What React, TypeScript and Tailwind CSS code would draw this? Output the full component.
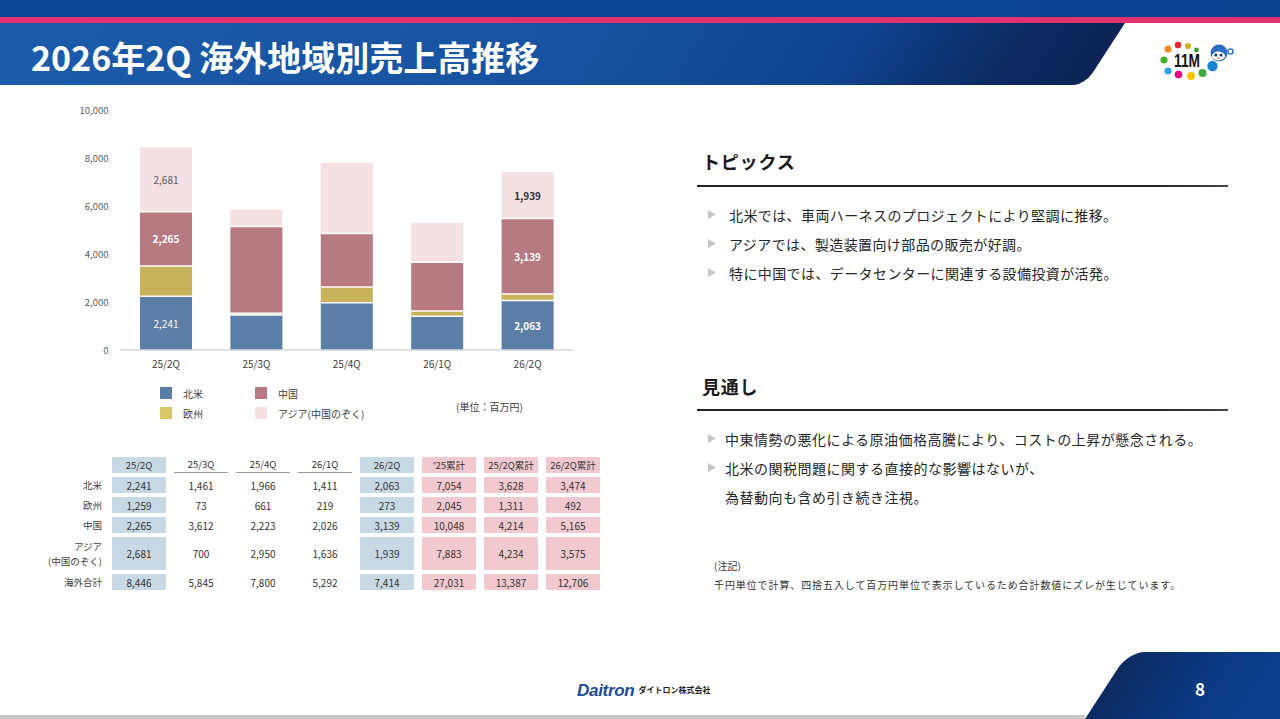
import React from "react";

const FONT = "'Noto Sans CJK JP', 'Noto Sans', sans-serif";

const series = [
  { name: "北米", color: "#5b7ea6", data: [2241, 1461, 1966, 1411, 2063] },
  { name: "欧州", color: "#c8b35a", data: [1259, 73, 661, 219, 273] },
  { name: "中国", color: "#b77a82", data: [2265, 3612, 2223, 2026, 3139] },
  { name: "アジア", color: "#f5e0e4", data: [2681, 700, 2950, 1636, 1939] },
];
const cats = ["25/2Q", "25/3Q", "25/4Q", "26/1Q", "26/2Q"];

const labels: { i: number; s: number; t: string; fill: string; bold: boolean }[] = [
  { i: 0, s: 0, t: "2,241", fill: "#ffffff", bold: false },
  { i: 0, s: 2, t: "2,265", fill: "#ffffff", bold: true },
  { i: 0, s: 3, t: "2,681", fill: "#595959", bold: false },
  { i: 4, s: 0, t: "2,063", fill: "#ffffff", bold: true },
  { i: 4, s: 2, t: "3,139", fill: "#ffffff", bold: true },
  { i: 4, s: 3, t: "1,939", fill: "#333333", bold: true },
];

function Chart() {
  const k = 0.024;
  const base = 250;
  const cx = (i: number) => 106 + i * 90.4;
  const w = 52;
  const rects: React.ReactNode[] = [];
  const seps: React.ReactNode[] = [];
  const texts: React.ReactNode[] = [];
  cats.forEach((_, i) => {
    let cum = 0;
    series.forEach((s, si) => {
      const v = s.data[i];
      const y = base - (cum + v) * k;
      rects.push(
        <rect key={`r${i}-${si}`} x={cx(i) - w / 2} y={y} width={w} height={v * k} fill={s.color} />
      );
      const lab = labels.find((l) => l.i === i && l.s === si);
      if (lab) {
        texts.push(
          <text
            key={`t${i}-${si}`}
            x={cx(i)}
            y={base - (cum + v / 2) * k}
            textAnchor="middle"
            dominantBaseline="central"
            fontSize={10}
            fontWeight={lab.bold ? 700 : 400}
            fill={lab.fill}
            fontFamily={FONT}
          >
            {lab.t}
          </text>
        );
      }
      cum += v;
      if (si < series.length - 1) {
        const yy = base - cum * k;
        seps.push(
          <line key={`s${i}-${si}`} x1={cx(i) - w / 2} x2={cx(i) + w / 2} y1={yy} y2={yy} stroke="#fff" strokeWidth={1.5} />
        );
      }
    });
  });
  const ticks = [10000, 8000, 6000, 4000, 2000, 0];
  return (
    <svg width={540} height={275} viewBox="0 0 540 275" className="block">
      {ticks.map((t) => (
        <text
          key={t}
          x={48.5}
          y={base - t * k}
          textAnchor="end"
          dominantBaseline="central"
          fontSize={9.5}
          fill="#595959"
          fontFamily={FONT}
        >
          {t.toLocaleString("en-US")}
        </text>
      ))}
      {rects}
      {seps}
      <line x1={60} x2={514} y1={base} y2={base} stroke="#d9d9d9" strokeWidth={1.5} />
      {texts}
      {cats.map((c, i) => (
        <text
          key={c}
          x={cx(i)}
          y={263}
          textAnchor="middle"
          dominantBaseline="central"
          fontSize={10}
          fill="#404040"
          fontFamily={FONT}
        >
          {c}
        </text>
      ))}
    </svg>
  );
}

function Logo() {
  return (
    <svg width={100} height={50} viewBox="0 5 100 50" className="block">
      <circle cx={18} cy={19} r={3.5} fill="#f08a24" />
      <circle cx={28} cy={15} r={3.2} fill="#e5262e" />
      <circle cx={38} cy={16} r={3} fill="#d4af1c" />
      <circle cx={46.5} cy={20} r={2.4} fill="#3f9b35" />
      <circle cx={14} cy={30} r={3.6} fill="#43b02a" />
      <circle cx={18} cy={41} r={3.6} fill="#29a8e0" />
      <circle cx={28.5} cy={44.5} r={3.8} fill="#e4007f" />
      <circle cx={41} cy={46} r={4} fill="#f7c600" />
      <circle cx={52.5} cy={43} r={4} fill="#3aa93a" />
      <circle cx={62.5} cy={36} r={5.2} fill="#1a85d0" />
      <text
        x={24}
        y={37}
        fontSize={18}
        fontWeight={700}
        fill="#111"
        fontFamily="'Liberation Sans', sans-serif"
        textLength={26}
        lengthAdjust="spacingAndGlyphs"
      >
        11M
      </text>
      <circle cx={80.5} cy={21.5} r={2.6} fill="none" stroke="#2a6cc0" strokeWidth={1.4} />
      <circle cx={69} cy={23} r={8.5} fill="#2a6cc0" />
      <ellipse cx={68.5} cy={26} rx={6.6} ry={4.4} fill="#fff" />
      <circle cx={65.8} cy={25} r={1.5} fill="#1a3470" />
      <circle cx={71} cy={25} r={1.5} fill="#1a3470" />
      <ellipse cx={68.4} cy={28.3} rx={1.6} ry={0.8} fill="#e07a7a" />
    </svg>
  );
}

type CellKind = "blue" | "plain" | "pink";
const headers: { t: string; k: CellKind }[] = [
  { t: "25/2Q", k: "blue" },
  { t: "25/3Q", k: "plain" },
  { t: "25/4Q", k: "plain" },
  { t: "26/1Q", k: "plain" },
  { t: "26/2Q", k: "blue" },
  { t: "'25累計", k: "pink" },
  { t: "25/2Q累計", k: "pink" },
  { t: "26/2Q累計", k: "pink" },
];
const rows: { label: string[]; v: string[] }[] = [
  { label: ["北米"], v: ["2,241", "1,461", "1,966", "1,411", "2,063", "7,054", "3,628", "3,474"] },
  { label: ["欧州"], v: ["1,259", "73", "661", "219", "273", "2,045", "1,311", "492"] },
  { label: ["中国"], v: ["2,265", "3,612", "2,223", "2,026", "3,139", "10,048", "4,214", "5,165"] },
  {
    label: ["アジア", "(中国のぞく)"],
    v: ["2,681", "700", "2,950", "1,636", "1,939", "7,883", "4,234", "3,575"],
  },
  { label: ["海外合計"], v: ["8,446", "5,845", "7,800", "5,292", "7,414", "27,031", "13,387", "12,706"] },
];

function bgFor(k: CellKind) {
  if (k === "blue") return "bg-[#c8d9e6]";
  if (k === "pink") return "bg-[#f2c9cf]";
  return "";
}

function DataTable() {
  return (
    <div className="ml-[40px] grid grid-cols-[64px_repeat(8,54px)] gap-x-[8px] gap-y-[4px] grid-rows-[16px_16px_16px_16px_33px_16px] text-[#333]">
      <div />
      {headers.map((h) => (
        <div
          key={h.t}
          className={`flex items-center justify-center text-[9.5px] whitespace-nowrap ${bgFor(h.k)} ${
            h.k === "plain" ? "border-b border-[#9a9a9a]" : ""
          }`}
        >
          {h.t}
        </div>
      ))}
      {rows.map((r) => (
        <React.Fragment key={r.label.join("")}>
          <div className="flex flex-col items-end justify-center pr-[2px] text-[9.5px] leading-[15px] whitespace-nowrap text-[#404040]">
            {r.label.map((l) => (
              <span key={l}>{l}</span>
            ))}
          </div>
          {r.v.map((v, ci) => (
            <div
              key={ci}
              className={`flex items-center justify-center text-[10px] ${bgFor(headers[ci].k)}`}
            >
              {v}
            </div>
          ))}
        </React.Fragment>
      ))}
    </div>
  );
}

function Tri() {
  return (
    <svg width={8} height={9} viewBox="0 0 8 9" className="block shrink-0">
      <polygon points="0,0 8,4.5 0,9" fill="#c6c6c6" />
    </svg>
  );
}

function Legend() {
  const items = [
    { c: "#5b7ea6", t: "北米" },
    { c: "#b77a82", t: "中国" },
    { c: "#dcc768", t: "欧州" },
    { c: "#f5e0e4", t: "アジア(中国のぞく)" },
  ];
  return (
    <div className="flex ml-[160px] mt-[12px]">
      <div className="grid grid-cols-[95px_140px] gap-y-[8px]">
        {items.map((it) => (
          <div key={it.t} className="flex items-center h-[12px]">
            <div className="w-[12px] h-[12px] shrink-0" style={{ backgroundColor: it.c }} />
            <span className="ml-[11px] text-[10px] text-[#404040] whitespace-nowrap">{it.t}</span>
          </div>
        ))}
      </div>
      <div className="ml-[61px] mt-[15px] text-[10px] text-[#404040] whitespace-nowrap leading-none">
        (単位：百万円)
      </div>
    </div>
  );
}

export default function App() {
  return (
    <div className="w-[1280px] h-[719px] bg-white overflow-hidden flex flex-col font-['Noto_Sans_CJK_JP','Noto_Sans',sans-serif] text-[#262626]">
      {/* header */}
      <div className="h-[17px] shrink-0 bg-[linear-gradient(90deg,#0b4797,#0a4290)]" />
      <div className="h-[6px] shrink-0 bg-[#e2336f]" />
      <div className="h-[62px] shrink-0 flex">
        <div className="relative w-[1125px] h-full overflow-hidden flex items-center pl-[31px]">
          <div className="absolute top-0 bottom-0 left-[-60px] w-[1185px] origin-top-left [transform:skewX(-33deg)] rounded-br-[12px] bg-[linear-gradient(90deg,#1d5dab_0%,#16529f_55%,#0f4390_78%,#0c2a60_92%,#0c2456_100%)]" />
          <h1 className="relative text-white font-bold text-[34px] leading-none pt-[5px] whitespace-nowrap">
            2026年2Q 海外地域別売上高推移
          </h1>
        </div>
        <div className="flex-1 pt-[12px] pl-[25px]">
          <Logo />
        </div>
      </div>

      {/* main */}
      <div className="flex-1 flex min-h-0">
        <div className="w-[640px] shrink-0 pt-[15px]">
          <div className="ml-[60px]">
            <Chart />
          </div>
          <Legend />
          <div className="mt-[38px]">
            <DataTable />
          </div>
        </div>
        <div className="flex-1">
          <div className="ml-[57px] w-[531px] pt-[63px]">
            <div className="pl-[5px] text-[18px] font-bold leading-[26px] tracking-[0.8px] text-[#1a1a1a]">
              トピックス
            </div>
            <div className="mt-[11px] h-[2px] bg-[linear-gradient(90deg,#222,#222_85%,#444)]" />
            <ul className="mt-[13px]">
              {[
                "北米では、車両ハーネスのプロジェクトにより堅調に推移。",
                "アジアでは、製造装置向け部品の販売が好調。",
                "特に中国では、データセンターに関連する設備投資が活発。",
              ].map((t) => (
                <li key={t} className="flex items-center h-[29px]">
                  <span className="ml-[11px]">
                    <Tri />
                  </span>
                  <span className="ml-[13px] text-[14px] leading-none tracking-[0.4px] whitespace-nowrap">{t}</span>
                </li>
              ))}
            </ul>

            <div className="mt-[86px] pl-[5px] text-[18px] font-bold leading-[26px] tracking-[0.8px] text-[#1a1a1a]">
              見通し
            </div>
            <div className="mt-[10px] h-[2px] bg-[linear-gradient(90deg,#222,#222_85%,#444)]" />
            <ul className="mt-[13px]">
              <li className="flex items-center h-[29px]">
                <span className="ml-[11px]">
                  <Tri />
                </span>
                <span className="ml-[9px] text-[14px] leading-none tracking-[0.5px] whitespace-nowrap">
                  中東情勢の悪化による原油価格高騰により、コストの上昇が懸念される。
                </span>
              </li>
              <li className="flex items-center h-[29px]">
                <span className="ml-[11px]">
                  <Tri />
                </span>
                <span className="ml-[9px] text-[14px] leading-none tracking-[0.5px] whitespace-nowrap">
                  北米の関税問題に関する直接的な影響はないが、
                </span>
              </li>
              <li className="flex items-center h-[29px] pl-[28px]">
                <span className="text-[14px] leading-none tracking-[0.5px] whitespace-nowrap">為替動向も含め引き続き注視。</span>
              </li>
            </ul>

            <div className="mt-[47px] pl-[17px] text-[10px] leading-[16px] text-[#333]">(注記)</div>
            <div className="mt-[3px] pl-[17px] text-[10px] leading-[16px] tracking-[0.9px] text-[#333] whitespace-nowrap">
              千円単位で計算、四捨五入して百万円単位で表示しているため合計数値にズレが生じています。
            </div>
          </div>
        </div>
      </div>

      {/* footer */}
      <div className="h-[67px] shrink-0 flex">
        <div className="flex-1 flex flex-col">
          <div className="flex-1 flex items-center pl-[577px] pt-[13px]">
            <span className="italic font-bold text-[17px] leading-none text-[#1b4a9b] font-['Liberation_Sans',sans-serif] tracking-[-0.3px]">
              Daitron
            </span>
            <span className="ml-[4px] text-[8px] font-bold leading-none text-[#222] whitespace-nowrap">
              ダイトロン株式会社
            </span>
          </div>
          <div className="h-[4px] bg-[#c9c9c9]" />
        </div>
        <div className="w-[195px] shrink-0 relative overflow-hidden flex items-center pl-[110px] pt-[6px]">
          <div className="absolute top-0 bottom-0 left-0 w-[320px] origin-bottom-left [transform:skewX(-33deg)] rounded-tl-[16px] bg-[linear-gradient(90deg,#0c2a60,#0b3b86_35%,#0b4597)]" />
          <span className="relative text-white font-bold text-[17px] leading-none">8</span>
        </div>
      </div>
    </div>
  );
}
